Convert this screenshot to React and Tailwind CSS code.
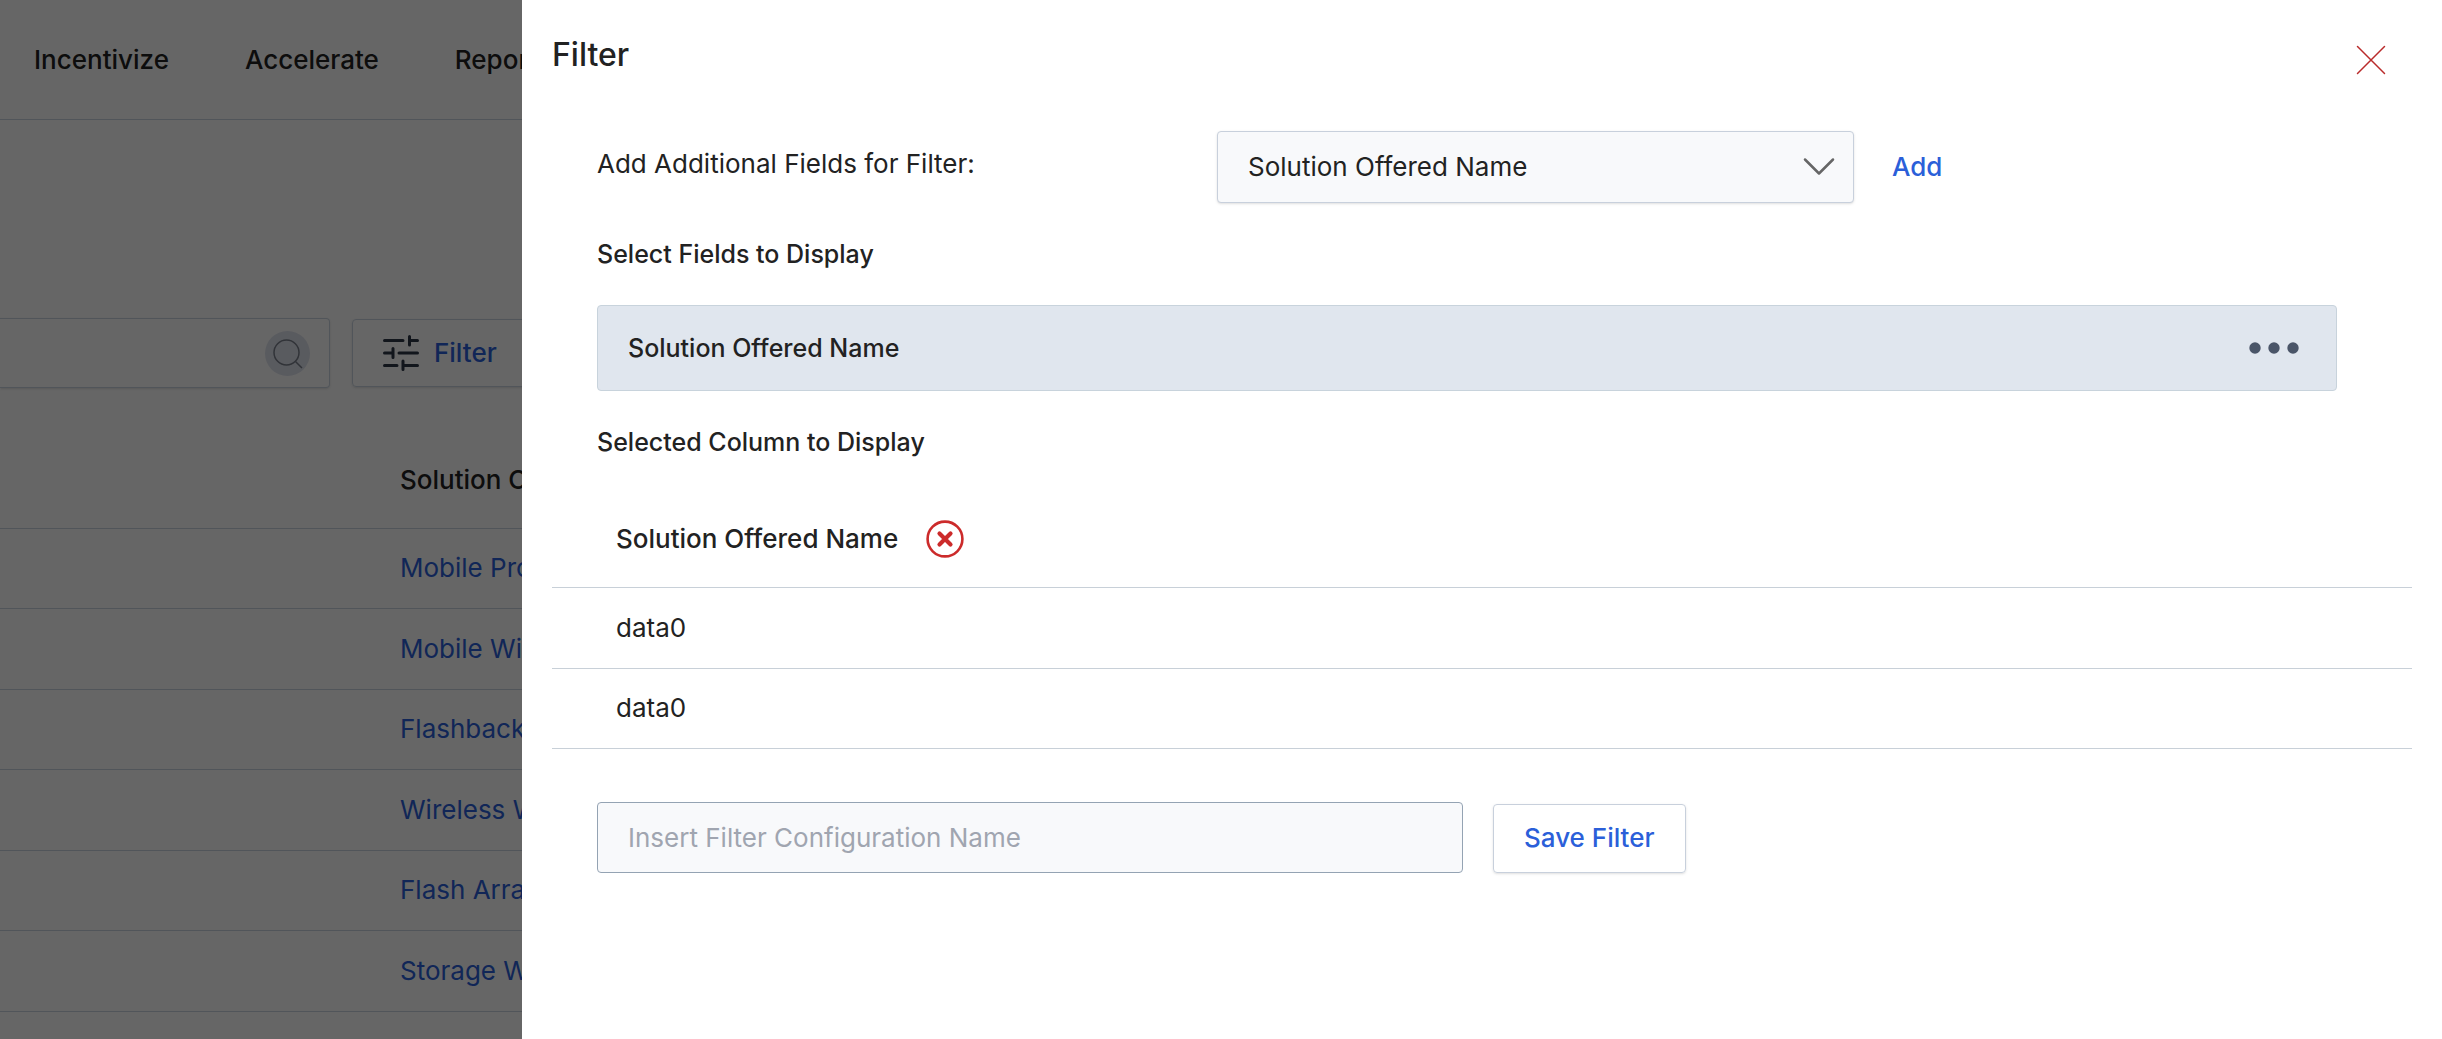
import React from 'react';

const solutions = [
  'Mobile Protection Plan',
  'Mobile Wireless Bundle',
  'Flashback Storage',
  'Wireless WAN',
  'Flash Array Storage',
  'Storage Works',
];

function SlidersIcon() {
  return (
    <svg width="36" height="36" viewBox="0 0 36 36" fill="none" stroke="#2d3748" strokeWidth="3" strokeLinecap="round" aria-hidden="true">
      <path d="M1.5 5.5H20M27 5.5H34.5M26.5 1.5V10M1.5 18H9M16 18H34.5M10 13.5V22.5M1.5 30.5H14M21 30.5H34.5M20 26V34.5" />
    </svg>
  );
}

function SearchIcon() {
  return (
    <svg width="45" height="45" viewBox="0 0 45 45" fill="none" aria-hidden="true">
      <circle cx="22.5" cy="22.5" r="22.5" fill="#dfe3ee" />
      <circle cx="21.5" cy="21.5" r="12.5" stroke="#7a808c" strokeWidth="1.5" />
      <path d="M30.5 30.5L37 37" stroke="#7a808c" strokeWidth="1.5" />
    </svg>
  );
}

function Page() {
  return (
    <div className="absolute inset-0 overflow-hidden">
      <nav className="flex h-[120px] items-center gap-[76px] border-b border-[#cbd5e0] px-[34px] font-medium">
        <a href="#incentivize">Incentivize</a>
        <a href="#accelerate">Accelerate</a>
        <a href="#reports">Reports</a>
      </nav>
      <div className="mt-[198px] flex items-center gap-[22px]">
        <div className="flex h-[70px] w-[330px] items-center rounded-r border border-l-0 border-[#cbd5e0] pr-[19px] shadow-sm">
          <input aria-label="Search" className="h-full min-w-0 flex-1 px-5 outline-none" />
          <button type="button" aria-label="Search">
            <SearchIcon />
          </button>
        </div>
        <button type="button" className="flex h-[68px] items-center gap-[15px] rounded border border-[#cbd5e0] px-[30px] font-medium text-[#2b5fd9] shadow-sm">
          <SlidersIcon />
          Filter
        </button>
      </div>
      <table className="mt-[45px] w-full text-left">
        <thead>
          <tr className="h-[95px] border-b border-[#cbd5e0]">
            <th className="pl-[400px] font-medium">Solution Offered Name</th>
          </tr>
        </thead>
        <tbody>
          {solutions.map((name) => (
            <tr key={name} className="h-[80px] border-b border-[#cbd5e0] even:h-[81px]">
              <td className="pl-[400px] text-[#2b5fd9]">
                <a href="#solution">{name}</a>
              </td>
            </tr>
          ))}
        </tbody>
      </table>
    </div>
  );
}

function FilterPanel() {
  return (
    <section role="dialog" aria-labelledby="filter-title" className="absolute inset-y-0 right-0 w-[1920px] max-w-full overflow-y-auto bg-white px-[30px]">
      <header className="flex h-[131px] items-start justify-between pt-[35px]">
        <h1 id="filter-title" className="text-[32px] leading-10 font-medium">Filter</h1>
        <button type="button" aria-label="Close" className="mt-[10px] mr-[26px]">
          <svg width="30" height="30" viewBox="0 0 30 30" stroke="#b92b2b" strokeWidth="1.5" strokeLinecap="round" aria-hidden="true">
            <path d="M1.5 1.5L28.5 28.5M28.5 1.5L1.5 28.5" />
          </svg>
        </button>
      </header>

      <div className="flex items-start px-[45px]">
        <label htmlFor="field" className="w-[620px] leading-[66px]">Add Additional Fields for Filter:</label>
        <div className="relative w-[637px]">
          <select id="field" className="h-[72px] w-full appearance-none rounded border border-[#c8d0dc] bg-[#f8f9fb] px-[30px] shadow-sm">
            <option>Solution Offered Name</option>
          </select>
          <svg className="pointer-events-none absolute top-[26px] right-[19px]" width="32" height="20" viewBox="0 0 32 20" fill="none" stroke="#666" strokeWidth="2.5" strokeLinecap="round" strokeLinejoin="round" aria-hidden="true">
            <path d="M2 2.5L16 16.5L30 2.5" />
          </svg>
        </div>
        <button type="button" className="ml-[38px] h-[72px] font-medium text-[#2b5fd9]">Add</button>
      </div>

      <h2 className="mt-[31px] px-[45px] text-[25px] leading-10 font-medium">Select Fields to Display</h2>
      <div className="mr-[75px] ml-[45px] mt-[31px] flex h-[86px] items-center justify-between rounded border border-[#c8d3dc] bg-[#e0e6ee] px-[30px] text-[25px] font-medium">
        Solution Offered Name
        <button type="button" aria-label="More options">
          <svg width="60" height="12" viewBox="0 0 60 12" fill="#4a5568" aria-hidden="true">
            <circle cx="9" cy="6" r="5.7" />
            <circle cx="28" cy="6" r="5.7" />
            <circle cx="47" cy="6" r="5.7" />
          </svg>
        </button>
      </div>

      <h2 className="mt-[31px] px-[45px] text-[25px] leading-10 font-medium">Selected Column to Display</h2>
      <table className="mt-[30px] w-full text-left">
        <thead>
          <tr className="h-[95px] border-b border-[#c8d0d8]">
            <th className="pl-[64px] font-medium">
              <div className="flex items-center gap-7">
                Solution Offered Name
                <button type="button" aria-label="Remove column">
                  <svg width="38" height="38" viewBox="0 0 38 38" fill="none" stroke="#cc2b2b" strokeLinecap="round" aria-hidden="true">
                    <circle cx="19" cy="19" r="17.4" strokeWidth="2.6" />
                    <path d="M13.5 13.5L24.5 24.5M24.5 13.5L13.5 24.5" strokeWidth="4.2" />
                  </svg>
                </button>
              </div>
            </th>
          </tr>
        </thead>
        <tbody>
          <tr className="h-[81px] border-b border-[#c8d0d8]">
            <td className="pl-[64px]">data0</td>
          </tr>
          <tr className="h-[80px] border-b border-[#c8d0d8]">
            <td className="pl-[64px]">data0</td>
          </tr>
        </tbody>
      </table>

      <form className="mt-[53px] flex items-end gap-[30px] px-[45px]">
        <input aria-label="Filter configuration name" placeholder="Insert Filter Configuration Name" className="h-[71px] w-[866px] rounded border border-[#94a3b3] bg-[#f8f9fb] px-[30px] outline-none placeholder:text-[#a0a5b0]" />
        <button type="button" className="h-[69px] rounded border border-[#c8d0dc] px-[30px] font-medium text-[#2b5fd9] shadow-sm">Save Filter</button>
      </form>
    </section>
  );
}

export default function App() {
  return (
    <main className="relative h-screen overflow-hidden bg-white font-['Inter',sans-serif] text-[26px] leading-10 text-[#222]">
      <Page />
      <div className="absolute inset-0 bg-black/60" />
      <FilterPanel />
    </main>
  );
}
